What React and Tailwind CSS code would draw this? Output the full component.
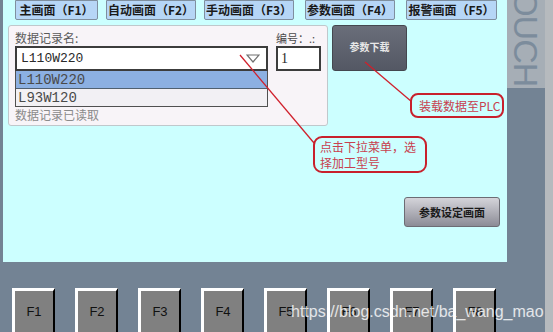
const tabs = [
  { label: "主画面（F1）", cls: "ml-[12px] w-[83px]" },
  { label: "自动画面（F2）", cls: "ml-[8px] w-[90px]" },
  { label: "手动画面（F3）", cls: "ml-[8px] w-[90px]" },
  { label: "参数画面（F4）", cls: "ml-[11px] w-[90px]" },
  { label: "报警画面（F5）", cls: "ml-[11px] w-[91px]" },
];

const fkeys = ["F1", "F2", "F3", "F4", "F5", "F6", "F7", "F8"];

const cjk = "font-['Noto_Sans_CJK_SC',sans-serif]";

export default function App() {
  return (
    <div className="relative flex w-[553px] h-[332px] overflow-hidden bg-[#738394]">
      <div className="flex flex-col w-[545px]">
        <div className="flex h-[262px]">
          {/* HMI screen */}
          <div className="relative ml-[3px] w-[504px] h-[262px] bg-[#ccffff]">
            <div className="flex h-[20px]">
              {tabs.map((t) => (
                <div
                  key={t.label}
                  className={`${t.cls} h-[20px] flex items-center justify-center bg-[#b6d6f6] border border-[#7f8f9f] rounded-b-[2px] text-[12px] font-bold text-[#1a1a1a] ${cjk} leading-none`}
                >
                  {t.label}
                </div>
              ))}
            </div>

            <div className="flex mt-[5px] ml-[5px]">
              <div className={`flex w-[320px] h-[101px] bg-[#f8f4f8] border border-[#c0c8cc] rounded-[3px] ${cjk}`}>
                <div className="flex flex-col w-[253px] ml-[6px]">
                  <div className="mt-[5px] h-[15px] text-[12px] leading-[14px] text-[#5a5a5a]">数据记录名:</div>
                  <div className="flex items-center h-[25px] bg-white border-2 border-[#3c3c3c] pl-[4px] pr-[6px]">
                    <span className="flex-1 font-['Liberation_Mono',monospace] text-[13px] text-[#2a2a2a]">L110W220</span>
                    <svg width="14" height="9" viewBox="0 0 14 9">
                      <path d="M1 1 L13 1 L7 8 Z" fill="none" stroke="#707070" strokeWidth="1.2" />
                    </svg>
                  </div>
                  <div className="flex flex-col border border-[#505050] border-t-0 font-['Liberation_Mono',monospace] text-[14px] text-[#4a4a4a] leading-none">
                    <div className="h-[18px] flex items-center pl-[2px] bg-[#8cb0e2] border-b border-[#506070]">L110W220</div>
                    <div className="h-[17px] flex items-center pl-[2px] bg-[#f2f0f4]">L93W120</div>
                  </div>
                  <div className="mt-[1px] text-[12px] leading-[14px] text-[#8a8a8a]">数据记录已读取</div>
                </div>
                <div className="flex flex-col ml-[8px]">
                  <div className="mt-[5px] h-[15px] text-[11px] leading-[14px] text-[#4a4a4a]">编号：.:</div>
                  <div className="flex items-center w-[45px] h-[25px] bg-white border-2 border-[#3c3c3c] pl-[3px] font-['Liberation_Serif',serif] text-[14px] text-[#2a2a2a]">
                    1
                  </div>
                </div>
              </div>

              <div className={`ml-[4px] w-[75px] h-[46px] flex justify-center pt-[13px] bg-gradient-to-b from-[#6a6e7a] to-[#545864] border border-[#44474f] rounded-[3px] text-[10px] font-bold text-[#e8e8e8] ${cjk}`}>
                参数下载
              </div>
            </div>

            <div className="flex justify-end mt-[71px] mr-[7px]">
              <div className={`w-[96px] h-[30px] flex items-center justify-center bg-gradient-to-b from-[#d4d4da] via-[#b0b0b8] to-[#8c8c96] border border-[#6c6c74] rounded-[3px] text-[11px] font-bold text-[#1a1a1a] ${cjk}`}>
                参数设定画面
              </div>
            </div>

            {/* annotations */}
            <svg className="absolute left-0 top-0 pointer-events-none" width="504" height="262">
              <line x1="237" y1="55" x2="311" y2="143" stroke="#d0202c" strokeWidth="1.3" />
              <line x1="362" y1="62" x2="409" y2="102" stroke="#d0202c" strokeWidth="1.3" />
            </svg>
            <div className={`absolute left-[407px] top-[93px] w-[94px] h-[25px] flex items-center pl-[7px] border-2 border-[#c8202c] rounded-[8px] bg-[#ccffff] text-[12px] text-[#c8404e] ${cjk}`}>
              装载数据至PLC
            </div>
            <div className={`absolute left-[310px] top-[136px] w-[114px] h-[37px] pl-[5px] pt-[1px] border-2 border-[#c8202c] rounded-[9px] bg-[#ccffff] text-[12px] leading-[16px] text-[#c8404e] ${cjk}`}>
              点击下拉菜单，选
              <br />
              择加工型号
            </div>
          </div>

          {/* right label strip */}
          <div className="w-[38px] h-[88px] bg-[#a6aeb6] overflow-hidden flex flex-col justify-end">
            <div className="[writing-mode:vertical-rl] font-['Liberation_Sans',sans-serif] text-[34px] leading-[38px] tracking-[-1px] text-[#7c8c9c] whitespace-nowrap pb-[2px]">
              TOUCH
            </div>
          </div>
        </div>

        {/* function keys */}
        <div className="flex gap-[20px] pl-[12px] pt-[26px]">
          {fkeys.map((k) => (
            <div
              key={k}
              className="w-[43px] h-[48px] flex justify-center pt-[11px] bg-[#808080] border-t-[3px] border-l-[3px] border-r-[2px] border-b-[2px] border-t-white border-l-white border-r-black border-b-black font-['Liberation_Sans',sans-serif] text-[13px] text-[#111]"
            >
              {k}
            </div>
          ))}
        </div>
      </div>
      <div className="w-[8px] bg-[#b6babe]" />

      <div className="absolute left-[291px] top-[302px] font-['Liberation_Sans',sans-serif] text-[16px] leading-[20px] text-white/80 whitespace-nowrap">
        https://blog.csdn.net/ba_wang_mao
      </div>
    </div>
  );
}
